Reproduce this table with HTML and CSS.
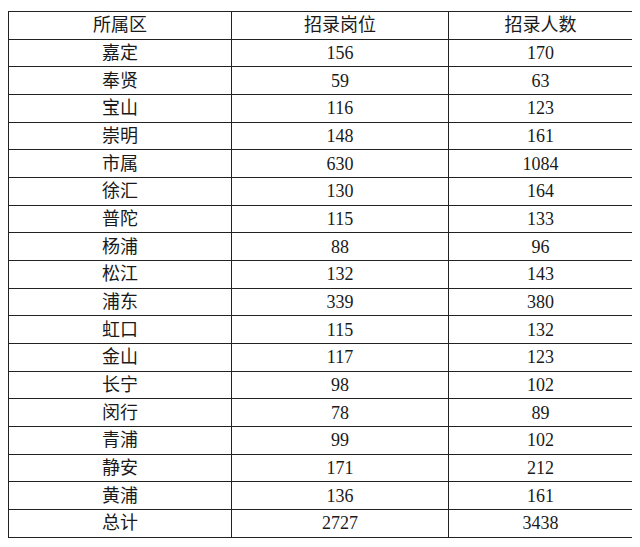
FILE: index.html
```html
<!DOCTYPE html>
<html lang="zh-CN">
<head>
<meta charset="utf-8">
<title>招录岗位</title>
<link rel="stylesheet" href="styles.css">
</head>
<body>
<table class="data">
  <colgroup>
    <col class="c1"><col class="c2"><col class="c3">
  </colgroup>
  <thead>
    <tr><th>所属区</th><th>招录岗位</th><th>招录人数</th></tr>
  </thead>
  <tbody>
    <tr><td>嘉定</td><td>156</td><td>170</td></tr>
    <tr><td>奉贤</td><td>59</td><td>63</td></tr>
    <tr><td>宝山</td><td>116</td><td>123</td></tr>
    <tr><td>崇明</td><td>148</td><td>161</td></tr>
    <tr><td>市属</td><td>630</td><td>1084</td></tr>
    <tr><td>徐汇</td><td>130</td><td>164</td></tr>
    <tr><td>普陀</td><td>115</td><td>133</td></tr>
    <tr><td>杨浦</td><td>88</td><td>96</td></tr>
    <tr><td>松江</td><td>132</td><td>143</td></tr>
    <tr><td>浦东</td><td>339</td><td>380</td></tr>
    <tr><td>虹口</td><td>115</td><td>132</td></tr>
    <tr><td>金山</td><td>117</td><td>123</td></tr>
    <tr><td>长宁</td><td>98</td><td>102</td></tr>
    <tr><td>闵行</td><td>78</td><td>89</td></tr>
    <tr><td>青浦</td><td>99</td><td>102</td></tr>
    <tr><td>静安</td><td>171</td><td>212</td></tr>
    <tr><td>黄浦</td><td>136</td><td>161</td></tr>
    <tr><td>总计</td><td>2727</td><td>3438</td></tr>
  </tbody>
</table>
</body>
</html>
```
FILE: styles.css
```css
html, body {
  background: #ffffff;
}
body {
  margin: 11px 8px 8px 8px;
  font-family: "Liberation Serif", "Noto Sans CJK SC", serif;
  color: #1a1a1a;
}
.data {
  border-collapse: collapse;
  width: 624px;
  table-layout: fixed;
  font-size: 18px;
}
.c1 { width: 223px; }
.c2 { width: 217px; }
.c3 { width: 184px; }
.data th,
.data td {
  border: 1px solid #222222;
  height: 26.68px;
  padding: 0;
  text-align: center;
  vertical-align: middle;
  font-weight: normal;
  line-height: 20px;
}
```
